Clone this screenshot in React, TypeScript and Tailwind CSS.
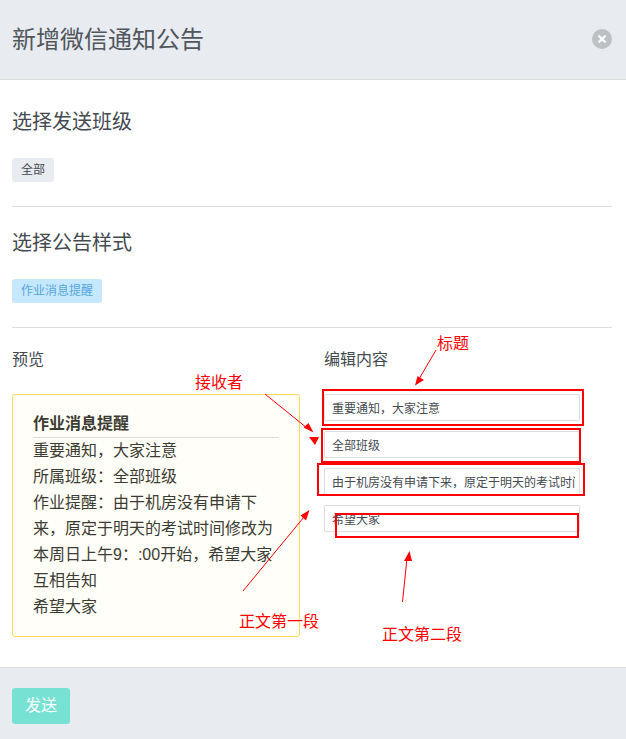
import React from 'react';

const cjk = { fontFamily: '"Liberation Sans", "Noto Sans CJK SC", sans-serif' };

const previewLines = [
  '重要通知，大家注意',
  '所属班级：全部班级',
  '作业提醒：由于机房没有申请下来，原定于明天的考试时间修改为本周日上午9：:00开始，希望大家互相告知',
  '希望大家',
];

const inputs = [
  '重要通知，大家注意',
  '全部班级',
  '由于机房没有申请下来，原定于明天的考试时间修改为本周日上午9：:00开始，希望大家互相告知',
  '希望大家',
];

const Section = ({ title, tag, className, tagClass }: { title: string; tag: string; className: string; tagClass: string }) => (
  <section className={`border-b border-[#dddddd] ml-3 mr-[14px] ${className}`}>
    <h2 className="text-[20px] leading-[28px] text-[#444a50] font-normal">{title}</h2>
    <span className={`inline-block mt-[22px] h-6 px-[9px] rounded-[3px] text-xs leading-6 ${tagClass}`}>{tag}</span>
  </section>
);

const Notes = () => (
  <div className="absolute inset-0 pointer-events-none">
    <svg className="absolute inset-0" width="626" height="739" fill="none">
      <g stroke="#ff0000" strokeWidth="2">
        <rect x="323" y="390" width="260" height="35" />
        <rect x="322" y="429" width="258" height="33" />
        <rect x="318" y="464" width="266" height="31" />
        <rect x="336" y="514" width="242" height="23" />
      </g>
      <g stroke="#ff0000" strokeWidth="1">
        <line x1="265" y1="394" x2="307" y2="428" />
        <line x1="243" y1="591" x2="304" y2="517" />
        <line x1="436" y1="350" x2="419" y2="379" />
        <line x1="402.5" y1="602" x2="407" y2="558" />
      </g>
      <g fill="#ff0000">
        <polygon points="313.5,432.5 303.5,427.5 308.5,423" />
        <polygon points="309,437 319,437 315,445" />
        <polygon points="309.5,510 300.5,515.5 306,520.5" />
        <polygon points="415,385.5 417.5,376 424,380" />
        <polygon points="409.5,551 404,561 412,561" />
      </g>
    </svg>
    <span className="absolute left-[195px] top-[374px] text-[16px] leading-[18px] text-[#ff0000]">接收者</span>
    <span className="absolute left-[437px] top-[335px] text-[16px] leading-[18px] text-[#ff0000]">标题</span>
    <span className="absolute left-[239px] top-[613px] text-[16px] leading-[18px] text-[#ff0000]">正文第一段</span>
    <span className="absolute left-[382px] top-[626px] text-[16px] leading-[18px] text-[#ff0000]">正文第二段</span>
  </div>
);

export default function App() {
  return (
    <div className="relative w-[626px] h-[739px] bg-white overflow-hidden flex flex-col" style={cjk}>
      {/* Header */}
      <header className="h-20 shrink-0 bg-[#e8ebf0] border-b border-[#dddddd] flex items-center justify-between pl-3 pr-[14px] pb-[1px]">
        <h1 className="text-[24px] font-normal text-[#50565c] mt-[1px]">新增微信通知公告</h1>
        <button className="w-5 h-5 rounded-full bg-[#bcbfc4] flex items-center justify-center">
          <svg width="10" height="10" viewBox="0 0 10 10" stroke="#ffffff" strokeWidth="2.4">
            <path d="M1.5 1.5l7 7M8.5 1.5l-7 7" />
          </svg>
        </button>
      </header>

      <Section className="h-[127px] pt-[28px]" title="选择发送班级" tag="全部" tagClass="bg-[#e8ebf0] text-[#444a50]" />
      <Section className="h-[121px] pt-[22px]" title="选择公告样式" tag="作业消息提醒" tagClass="bg-[#c6e8ff] text-[#56a5dc]" />

      {/* Preview and edit columns */}
      <div className="flex-1 flex px-3 pt-[22px]">
        <div className="w-[288px] mr-6">
          <div className="text-[16px] leading-5 text-[#444a50]">预览</div>
          <div className="mt-[24px] h-[243px] rounded-[3px] border border-[#ffd95c] bg-[#fffef8] px-5 pt-[16px] text-[#3c3c32]">
            <div className="text-[16px] leading-[26px] font-bold border-b border-[#dddddd]">作业消息提醒</div>
            {previewLines.map((line, i) => (
              <p key={i} className="text-[16px] leading-[26px]">{line}</p>
            ))}
          </div>
        </div>
        <div className="w-[256px]">
          <div className="text-[16px] leading-5 text-[#444a50]">编辑内容</div>
          <div className="mt-[24px] flex flex-col gap-[10px]">
            {inputs.map((value, i) => (
              <input
                key={i}
                readOnly
                value={value}
                className="w-[256px] h-[27px] pl-[7px] pr-[4px] rounded-[2px] border border-[#dddddd] bg-white text-xs text-[#444a50] outline-none"
                style={cjk}
              />
            ))}
          </div>
        </div>
      </div>

      {/* Footer */}
      <footer className="h-[72px] shrink-0 bg-[#e8ebf0] border-t border-[#dddddd] px-3 pt-[20px]">
        <button className="w-[58px] h-9 rounded-[3px] bg-[#77e2d3] text-white text-[16px]">发送</button>
      </footer>

      <Notes />
    </div>
  );
}
